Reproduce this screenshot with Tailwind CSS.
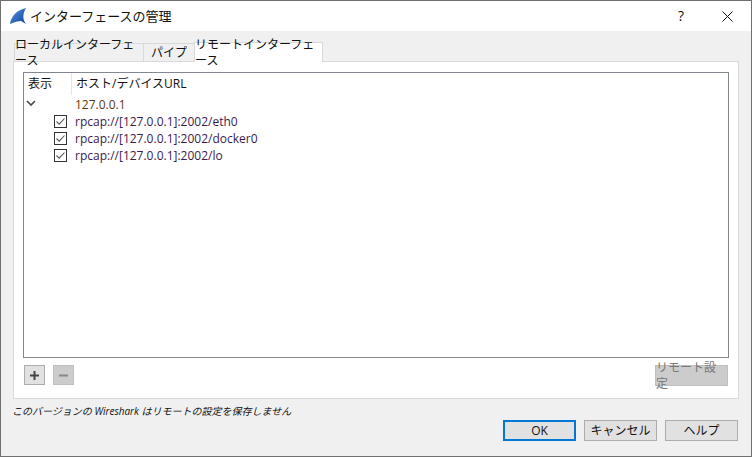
<!DOCTYPE html>
<html lang="ja">
<head>
<meta charset="utf-8">
<script src="https://cdn.jsdelivr.net/npm/@tailwindcss/browser@4"></script>
</head>
<body class="m-0">
<div class="w-[752px] h-[457px] flex flex-col border border-[#707070] bg-[#f0f0f0] overflow-hidden text-[12px] leading-[16px] text-[#111] font-['Open_Sans','Noto_Sans_CJK_JP',sans-serif]">
  <div class="h-[30px] shrink-0 bg-white flex items-center pl-[8px]">
    <svg width="18" height="18" viewBox="0 0 18 18" class="shrink-0">
      <defs><linearGradient id="g" x1="0" y1="0" x2="1" y2="1"><stop offset="0" stop-color="#5b9be0"/><stop offset="1" stop-color="#0b3f9e"/></linearGradient></defs>
      <path d="M1 17 C2 9 8 3 17 1 C14 6 13 12 17 17 L12 14 C9 14 6 15 1 17 Z" fill="url(#g)"/>
    </svg>
    <span class="ml-[3px] text-[13px]">インターフェースの管理</span>
    <span class="ml-auto w-[46px] text-center text-[14px]">?</span>
    <span class="w-[46px] flex justify-center mr-[1px]">
      <svg width="11" height="11" viewBox="0 0 11 11"><path d="M0.5 0.5 L10.5 10.5 M10.5 0.5 L0.5 10.5" stroke="#111" stroke-width="1" fill="none"/></svg>
    </span>
  </div>
  <div class="flex-1 flex flex-col px-[12px] pt-[11px] pb-[9px]">
    <div class="flex items-end h-[20px] pl-[1px] relative z-10">
      <div class="w-[130px] h-[18px] bg-[#f0f0f0] border border-b-0 border-[#d9d9d9] flex items-center justify-center mb-[1px]">ローカルインターフェース</div>
      <div class="w-[51px] h-[18px] bg-[#f0f0f0] border border-b-0 border-l-0 border-[#d9d9d9] flex items-center justify-center mb-[1px]">パイプ</div>
      <div class="w-[129px] h-[20px] bg-white border border-b-0 border-[#d9d9d9] flex items-center justify-center -ml-px">リモートインターフェース</div>
    </div>
    <div class="h-[338px] -mt-px bg-white border border-[#d9d9d9] px-[9px] pt-[10px] flex flex-col">
      <div class="h-[286px] border border-[#828790] bg-white flex flex-col shrink-0">
        <div class="flex h-[22px] shrink-0">
          <div class="w-[48px] pl-[4px] pt-[3px] border-r border-[#e5e5e5]">表示</div>
          <div class="pl-[4px] pt-[3px]">ホスト/デバイスURL</div>
        </div>
        <div class="flex items-center h-[17px] mt-[1px]">
          <div class="w-[49px] pl-[2px]"><svg width="10" height="6" viewBox="0 0 10 6" class="block mb-[3px]"><path d="M1 1 L5 5 L9 1" stroke="#444" stroke-width="1.6" fill="none"/></svg></div>
          <div class="pl-[2px] text-[#5a3a10]">127.0.0.1</div>
        </div>
        <div class="flex items-center h-[17px]">
          <div class="w-[49px] flex justify-end pr-[6px]"><svg width="13" height="13" viewBox="0 0 13 13"><rect x="0.5" y="0.5" width="12" height="12" fill="#fff" stroke="#333"/><path d="M2.5 6.5 L5.2 9.2 L10.5 3.5" stroke="#555" stroke-width="1.1" fill="none"/></svg></div>
          <div class="pl-[2px] text-[#3a1a50]">rpcap://[127.0.0.1]:2002/eth0</div>
        </div>
        <div class="flex items-center h-[17px]">
          <div class="w-[49px] flex justify-end pr-[6px]"><svg width="13" height="13" viewBox="0 0 13 13"><rect x="0.5" y="0.5" width="12" height="12" fill="#fff" stroke="#333"/><path d="M2.5 6.5 L5.2 9.2 L10.5 3.5" stroke="#555" stroke-width="1.1" fill="none"/></svg></div>
          <div class="pl-[2px] text-[#3a1a50]">rpcap://[127.0.0.1]:2002/docker0</div>
        </div>
        <div class="flex items-center h-[17px]">
          <div class="w-[49px] flex justify-end pr-[6px]"><svg width="13" height="13" viewBox="0 0 13 13"><rect x="0.5" y="0.5" width="12" height="12" fill="#fff" stroke="#333"/><path d="M2.5 6.5 L5.2 9.2 L10.5 3.5" stroke="#555" stroke-width="1.1" fill="none"/></svg></div>
          <div class="pl-[2px] text-[#3a1a50]">rpcap://[127.0.0.1]:2002/lo</div>
        </div>
      </div>
      <div class="flex mt-[7px] pl-[1px] pr-[1px]">
        <div class="w-[21px] h-[20px] bg-[#e1e1e1] border border-[#adadad] flex items-center justify-center">
          <svg width="9" height="9" viewBox="0 0 9 9"><path d="M4.5 0 V9 M0 4.5 H9" stroke="#444" stroke-width="2"/></svg>
        </div>
        <div class="w-[21px] h-[20px] ml-[8px] bg-[#cccccc] border border-[#bfbfbf] flex items-center justify-center">
          <svg width="9" height="9" viewBox="0 0 9 9"><path d="M0 4.5 H9" stroke="#888" stroke-width="2"/></svg>
        </div>
        <div class="ml-auto w-[73px] h-[21px] bg-[#cccccc] border border-[#bfbfbf] text-[#787878] flex items-center justify-center">リモート設定</div>
      </div>
    </div>
    <div class="h-[12px] mt-[6px] pl-[-1px] text-[10px] leading-[12px] italic -ml-[1px]">このバージョンの Wireshark はリモートの設定を保存しません</div>
    <div class="flex justify-end mt-[3px] gap-[8px] pr-[1px]">
      <div class="w-[73px] h-[21px] bg-[#e1e1e1] border-2 border-[#0078d7] flex items-center justify-center">OK</div>
      <div class="w-[73px] h-[21px] bg-[#e1e1e1] border border-[#adadad] flex items-center justify-center">キャンセル</div>
      <div class="w-[73px] h-[21px] bg-[#e1e1e1] border border-[#adadad] flex items-center justify-center">ヘルプ</div>
    </div>
  </div>
</div>
</body>
</html>
